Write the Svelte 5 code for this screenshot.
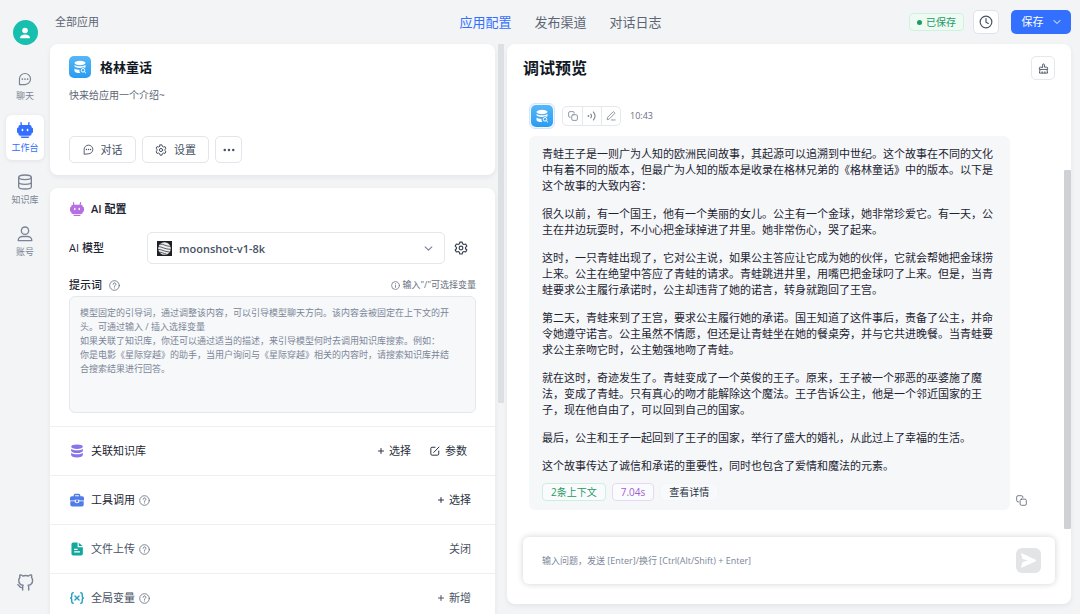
<script lang="ts">
	interface NavItem {
		icon: string;
		label: string;
	}

	interface Action {
		icon?: string;
		label: string;
	}

	interface Section {
		icon: string;
		label: string;
		strong?: boolean;
		help?: boolean;
		actions: Action[];
	}

	const nav: NavItem[] = [
		{ icon: 'chat', label: '聊天' },
		{ icon: 'bot', label: '工作台' },
		{ icon: 'db', label: '知识库' },
		{ icon: 'user', label: '账号' }
	];

	const tabs = ['应用配置', '发布渠道', '对话日志'];

	const sections: Section[] = [
		{
			icon: 'dataset',
			label: '关联知识库',
			strong: true,
			actions: [
				{ icon: 'plus', label: '选择' },
				{ icon: 'edit', label: '参数' }
			]
		},
		{
			icon: 'toolbox',
			label: '工具调用',
			strong: true,
			help: true,
			actions: [{ icon: 'plus', label: '选择' }]
		},
		{ icon: 'file', label: '文件上传', help: true, actions: [{ label: '关闭' }] },
		{
			icon: 'variable',
			label: '全局变量',
			help: true,
			actions: [{ icon: 'plus', label: '新增' }]
		}
	];

	const promptHint =
		'模型固定的引导词，通过调整该内容，可以引导模型聊天方向。该内容会被固定在上下文的开头。可通过输入 / 插入选择变量\n' +
		'如果关联了知识库，你还可以通过适当的描述，来引导模型何时去调用知识库搜索。例如：\n' +
		'你是电影《星际穿越》的助手，当用户询问与《星际穿越》相关的内容时，请搜索知识库并结合搜索结果进行回答。';

	const story = [
		'青蛙王子是一则广为人知的欧洲民间故事，其起源可以追溯到中世纪。这个故事在不同的文化中有着不同的版本，但最广为人知的版本是收录在格林兄弟的《格林童话》中的版本。以下是这个故事的大致内容：',
		'很久以前，有一个国王，他有一个美丽的女儿。公主有一个金球，她非常珍爱它。有一天，公主在井边玩耍时，不小心把金球掉进了井里。她非常伤心，哭了起来。',
		'这时，一只青蛙出现了，它对公主说，如果公主答应让它成为她的伙伴，它就会帮她把金球捞上来。公主在绝望中答应了青蛙的请求。青蛙跳进井里，用嘴巴把金球叼了上来。但是，当青蛙要求公主履行承诺时，公主却违背了她的诺言，转身就跑回了王宫。',
		'第二天，青蛙来到了王宫，要求公主履行她的承诺。国王知道了这件事后，责备了公主，并命令她遵守诺言。公主虽然不情愿，但还是让青蛙坐在她的餐桌旁，并与它共进晚餐。当青蛙要求公主亲吻它时，公主勉强地吻了青蛙。',
		'就在这时，奇迹发生了。青蛙变成了一个英俊的王子。原来，王子被一个邪恶的巫婆施了魔法，变成了青蛙。只有真心的吻才能解除这个魔法。王子告诉公主，他是一个邻近国家的王子，现在他自由了，可以回到自己的国家。',
		'最后，公主和王子一起回到了王子的国家，举行了盛大的婚礼，从此过上了幸福的生活。',
		'这个故事传达了诚信和承诺的重要性，同时也包含了爱情和魔法的元素。'
	];

	let activeNav = $state(1);
	let activeTab = $state(0);
	let model = $state('moonshot-v1-8k');
	let prompt = $state('');
	let question = $state('');
</script>

{#snippet icon(name: string, size: number)}
	<svg
		width={size}
		height={size}
		viewBox="0 0 24 24"
		fill="none"
		stroke="currentColor"
		stroke-width="2"
		stroke-linecap="round"
		stroke-linejoin="round"
		aria-hidden="true"
	>
		{#if name === 'chat'}
			<path d="M2.500 21.500V12A9.500 9.500 0 1 1 12 21.500z" />
			<g fill="currentColor" stroke="none">
				<circle cx="7.500" cy="12" r="1.500" />
				<circle cx="12" cy="12" r="1.500" />
				<circle cx="16.500" cy="12" r="1.500" />
			</g>
		{:else if name === 'bot'}
			<g fill="currentColor" stroke="none">
				<path
					fill-rule="evenodd"
					d="M5 4.500h14a3 3 0 0 1 3 3v1h.5A1.500 1.500 0 0 1 24 10v5a1.500 1.500 0 0 1-1.500 1.500H22v1a3 3 0 0 1-3 3H5a3 3 0 0 1-3-3v-1h-.5A1.500 1.500 0 0 1 0 15v-5a1.500 1.500 0 0 1 1.500-1.500H2v-1a3 3 0 0 1 3-3zM8.200 10A1.200 1.200 0 0 0 7 11.200v1.600a1.200 1.200 0 0 0 2.400 0v-1.600A1.200 1.200 0 0 0 8.200 10zm7.600 0a1.200 1.200 0 0 0-1.200 1.200v1.600a1.200 1.200 0 0 0 2.400 0v-1.600a1.200 1.200 0 0 0-1.200-1.200z"
				/>
				<path d="M5.500 21.700h13c-.3 1.500-1.300 2.300-2.800 2.300H8.300c-1.500 0-2.500-.8-2.800-2.300z" />
			</g>
			<path d="M6 1l.6 4.500M18 1l-.6 4.500" />
		{:else if name === 'db'}
			<ellipse cx="12" cy="5" rx="9.500" ry="3.500" />
			<path d="M2.500 5v14c0 2 4.200 3.500 9.500 3.500s9.500-1.500 9.500-3.500V5M2.500 12c0 2 4.200 3.500 9.500 3.500s9.500-1.500 9.500-3.500" />
		{:else if name === 'user'}
			<circle cx="12" cy="7" r="5.500" />
			<path d="M1.800 22c0-4 3.200-6.200 6.400-6.200h7.600c3.200 0 6.400 2.200 6.400 6.200z" />
		{:else if name === 'github'}
			<path
				d="M8 22.500v-3.500c-2.800.8-4.200-.4-5-2.200-.5-1-1.200-1.500-2-1.800M16.500 22.500v-4c0-1.200-.2-2-.8-2.700 3.300-.4 6.300-1.800 6.300-6.800 0-1.600-.5-3-1.500-4.200.4-1.200.3-2.500-.2-3.500-1.500-.1-3 .7-4 1.500a14 14 0 0 0-8 0C7.300 2 5.700 1.200 4.300 1.300c-.5 1-.6 2.300-.2 3.500C3 6 2.500 7.400 2.500 9c0 5 3 6.400 6.200 6.800-.6.700-.8 1.500-.7 2.700"
			/>
		{:else if name === 'gear'}
			<path
				d="M10 1.800h4l.7 3 2.300 1.300 3-.9 2 3.500-2.200 2.100v2.500l2.200 2.100-2 3.500-3-.9-2.300 1.300-.7 3h-4l-.7-3L7 18l-3 .9-2-3.500 2.200-2.100v-2.500L2 8.700l2-3.500 3 .9 2.300-1.300z"
			/>
			<circle cx="12" cy="12" r="3.200" />
		{:else if name === 'more'}
			<g fill="currentColor" stroke="none">
				<circle cx="3.500" cy="12" r="2.500" />
				<circle cx="12" cy="12" r="2.500" />
				<circle cx="20.500" cy="12" r="2.500" />
			</g>
		{:else if name === 'help'}
			<circle cx="12" cy="12" r="10.500" stroke-width="1.800" />
			<path d="M9 9.300a3 3 0 1 1 4.600 2.500c-1 .7-1.600 1.200-1.600 2.200M12 17.300v.2" />
		{:else if name === 'info'}
			<circle cx="12" cy="12" r="10.500" />
			<path d="M12 11v6M12 7v.2" />
		{:else if name === 'chevron'}
			<path d="M3 7.500l9 9 9-9" stroke-width="3" />
		{:else if name === 'plus'}
			<path d="M12 2v20M2 12h20" stroke-width="4" />
		{:else if name === 'edit'}
			<path d="M12 3H5a3 3 0 0 0-3 3v13a3 3 0 0 0 3 3h13a3 3 0 0 0 3-3v-7M9 15.500L21.500 2.500" stroke-width="2.400" />
		{:else if name === 'dataset'}
			<g fill="currentColor" stroke="none">
				<path d="M12 1c6 0 10 1.600 10 3.700S18 8.500 12 8.500 2 6.800 2 4.700 6 1 12 1z" />
				<path d="M2 8c2 1.800 5.600 2.700 10 2.700S20 9.800 22 8v3.500c0 2.100-4 4-10 4s-10-1.900-10-4z" />
				<path d="M2 15c2 1.800 5.600 2.700 10 2.700s8-.9 10-2.700v3.700c0 2.300-4 4.300-10 4.300S2 21 2 18.700z" />
			</g>
		{:else if name === 'toolbox'}
			<path d="M7.500 6.500V4.200A1.700 1.700 0 0 1 9.200 2.500h5.600a1.700 1.700 0 0 1 1.700 1.700v2.300" stroke-width="2.500" />
			<g fill="currentColor" stroke="none">
				<path d="M3 5.500h18a3 3 0 0 1 3 3V13h-8v-1.500H8V13H0V8.500a3 3 0 0 1 3-3z" />
				<path d="M.5 14.200H8c0 2 1.500 3.300 4 3.300s4-1.300 4-3.300h7.500v5.800a3 3 0 0 1-3 3h-17a3 3 0 0 1-3-3z" />
				<path d="M10 12.500h4v2.300c0 1.600-4 1.600-4 0z" />
			</g>
		{:else if name === 'file'}
			<path
				fill="currentColor"
				stroke="none"
				fill-rule="evenodd"
				d="M5.500 1H13v6.500A1.500 1.500 0 0 0 14.500 9H22v11a3 3 0 0 1-3 3H5.500a3 3 0 0 1-3-3V4a3 3 0 0 1 3-3zM15 1.300L21.700 7H15zM7 11.500v2h6v-2zm0 4.500v2h10v-2z"
			/>
		{:else if name === 'variable'}
			<path d="M5.500 3C3 3 3 4.500 3 6.500v3C3 11 2.300 12 .8 12 2.300 12 3 13 3 14.500v3C3 19.500 3 21 5.500 21M18.500 3C21 3 21 4.500 21 6.500v3c0 1.500.7 2.500 2.200 2.500-1.500 0-2.200 1-2.200 2.500v3c0 2 0 3.500-2.500 3.500M8.500 8.500l7 7M15.500 8.500l-7 7" stroke-width="2.400" />
		{:else if name === 'clock'}
			<circle cx="12" cy="12" r="10" />
			<path d="M12 6v6.500l4 2" />
		{:else if name === 'brush'}
			<path d="M10 9V4a2 2 0 0 1 4 0v5h5a2 2 0 0 1 2 2v3H3v-3a2 2 0 0 1 2-2zM4.500 14L3 22h18l-1.500-8M9 22v-3M15 22v-3" />
		{:else if name === 'copy'}
			<rect x="9" y="9" width="13.500" height="13.500" rx="3" />
			<path d="M5.500 15H4.500a3 3 0 0 1-3-3V4.500a3 3 0 0 1 3-3H12a3 3 0 0 1 3 3V5.500" />
		{:else if name === 'voice'}
			<path d="M9 7.500a7 7 0 0 1 0 9M15.500 2.500c4.500 5.500 4.500 13.500 0 19" stroke-width="2.600" />
			<circle cx="3.500" cy="12" r="2.200" fill="currentColor" stroke="none" />
		{:else if name === 'pen'}
			<path d="M3 20l1-5L16.500 2.500a2 2 0 0 1 2.800 0l1.200 1.200a2 2 0 0 1 0 2.800L8 19zM13 21.500h9" />
		{/if}
	</svg>
{/snippet}

{#snippet appLogo()}
	<svg class="app-logo" viewBox="0 0 22 22" aria-hidden="true">
		<defs>
			<linearGradient id="sky" x1="0" y1="0" x2="0" y2="1">
				<stop offset="0" stop-color="#56b7f6" />
				<stop offset="1" stop-color="#2a9bf2" />
			</linearGradient>
		</defs>
		<rect width="22" height="22" rx="5" fill="url(#sky)" />
		<g fill="#fff">
			<ellipse cx="11" cy="7" rx="5.500" ry="2.200" />
			<path d="M5.500 8.900c1.300.9 3.200 1.300 5.500 1.300s4.200-.4 5.500-1.300v2c0 .3-.2.600-.6.800-.6-.2-1.200-.4-1.900-.4-.8 0-1.500.2-2.100.6-3.700.3-6.400-.6-6.400-1.800z" />
			<path d="M5.500 12.400c1.200.8 2.900 1.300 5 1.300a3.400 3.400 0 0 0 .9 3.300c-3.500.1-5.900-.9-5.900-2.100z" />
		</g>
		<circle cx="14" cy="14.300" r="1.800" fill="none" stroke="#fff" />
		<path d="M15.400 15.700l1.300 1.300" stroke="#fff" stroke-linecap="round" />
	</svg>
{/snippet}

<div class="app">
	<aside class="sidebar">
		<button class="avatar" aria-label="用户">
			<svg width="12" height="12" viewBox="0 0 12 12" fill="#fff" aria-hidden="true">
				<circle cx="6" cy="3.500" r="2.800" />
				<path d="M1 11.200c0-2.500 2-3.700 5-3.700s5 1.200 5 3.700z" />
			</svg>
		</button>
		<nav class="nav">
			{#each nav as item, i (item.icon)}
				<a
					class="nav-item"
					class:active={i === activeNav}
					href="#{item.icon}"
					onclick={() => (activeNav = i)}
				>
					{@render icon(item.icon, item.icon === 'chat' ? 14 : 16)}
					<span>{item.label}</span>
				</a>
			{/each}
		</nav>
		<a class="github" href="#github" aria-label="GitHub">{@render icon('github', 17)}</a>
	</aside>

	<main class="main">
		<header class="topbar">
			<a class="back" href="#apps">全部应用</a>
			<nav class="tabs">
				{#each tabs as tab, i (tab)}
					<button class="tab" class:active={i === activeTab} onclick={() => (activeTab = i)}>
						{tab}
					</button>
				{/each}
			</nav>
			<div class="tools">
				<span class="saved"><i class="dot"></i>已保存</span>
				<button class="history" aria-label="历史">{@render icon('clock', 14)}</button>
				<button class="save">保存 {@render icon('chevron', 8)}</button>
			</div>
		</header>

		<div class="body">
			<div class="config">
				<section class="card intro">
					<div class="intro-head">
						{@render appLogo()}
						<h1>格林童话</h1>
					</div>
					<p class="intro-text">快来给应用一个介绍~</p>
					<div class="intro-actions">
						<button class="btn">{@render icon('chat', 11)}对话</button>
						<button class="btn">{@render icon('gear', 12)}设置</button>
						<button class="btn square" aria-label="更多">{@render icon('more', 12)}</button>
					</div>
				</section>

				<section class="card settings">
					<div class="ai">
						<h2 class="ai-title">
							<span class="tint bot">{@render icon('bot', 14)}</span>AI 配置
						</h2>
						<div class="model">
							<label for="model">AI 模型</label>
							<div class="select">
								<svg width="15" height="15" viewBox="0 0 15 15" aria-hidden="true">
									<rect width="15" height="15" fill="#1d1f22" />
									<circle cx="7.500" cy="7.500" r="6.300" fill="#eceef0" />
									<path
										d="M3 3.200c3.500-.6 5.500 2.300 11 2.200M1 5.500c4 .2 6.500 2.700 12.800 2.800M1 8.300c4 .2 6 2.300 11.500 2.700M2 11.200c3 0 4.500 1.300 7.500 1.900"
										fill="none"
										stroke="#1d1f22"
										stroke-width="0.700"
									/>
								</svg>
								<select id="model" bind:value={model}>
									<option>moonshot-v1-8k</option>
								</select>
								<span class="arrow">{@render icon('chevron', 9)}</span>
							</div>
							<button class="gear" aria-label="模型设置">{@render icon('gear', 14)}</button>
						</div>
						<div class="prompt-head">
							<label for="prompt">提示词</label>
							<span class="help">{@render icon('help', 11)}</span>
							<span class="tip">{@render icon('info', 9)}输入"/"可选择变量</span>
						</div>
						<textarea id="prompt" placeholder={promptHint} bind:value={prompt}></textarea>
					</div>

					{#each sections as s (s.icon)}
						<div class="row">
							<span class="tint {s.icon}">{@render icon(s.icon, 14)}</span>
							<h3 class:strong={s.strong}>{s.label}</h3>
							{#if s.help}
								<span class="help">{@render icon('help', 11)}</span>
							{/if}
							<div class="row-actions" class:multi={s.actions.length > 1}>
								{#each s.actions as a (a.label)}
									<button class="ghost" class:strong={s.strong}>
										{#if a.icon}{@render icon(a.icon, a.icon === 'plus' ? 6 : 10)}{/if}{a.label}
									</button>
								{/each}
							</div>
						</div>
					{/each}
				</section>
			</div>

			<div class="config-track"><div class="thumb"></div></div>

			<section class="card preview">
				<div class="preview-head">
					<h2>调试预览</h2>
					<button class="clear" aria-label="清空">{@render icon('brush', 11)}</button>
				</div>

				<div class="chat">
					<div class="messages">
						<div class="msg-head">
							<span class="msg-avatar">{@render appLogo()}</span>
							<div class="msg-tools">
								<button aria-label="复制">{@render icon('copy', 10)}</button>
								<button aria-label="朗读">{@render icon('voice', 10)}</button>
								<button aria-label="编辑">{@render icon('pen', 10)}</button>
							</div>
							<time>10:43</time>
						</div>
						<div class="msg-row">
							<article class="bubble">
								{#each story as p}
									<p>{p}</p>
								{/each}
								<div class="tags">
									<button class="tag green">2条上下文</button>
									<span class="tag purple">7.04s</span>
									<button class="tag plain">查看详情</button>
								</div>
							</article>
							<button class="copy" aria-label="复制">{@render icon('copy', 11)}</button>
						</div>
					</div>
					<div class="chat-track"><div class="thumb"></div></div>
				</div>

				<div class="composer">
					<input
						type="text"
						aria-label="输入问题"
						placeholder="输入问题，发送 [Enter]/换行 [Ctrl(Alt/Shift) + Enter]"
						bind:value={question}
					/>
					<button class="send" aria-label="发送">
						<svg width="15" height="15" viewBox="0 0 15 15" fill="#fff" aria-hidden="true">
							<path d="M1.200.4l13 6.200a1 1 0 0 1 0 1.800l-13 6.200c-.7.300-1.200-.3-1-.9L1.500 9l5.500-1.500L1.500 6 .2 1.300C0 .7.500.1 1.200.4z" />
						</svg>
					</button>
				</div>
			</section>
		</div>
	</main>
</div>

<style>
	:global(body) {
		margin: 0;
		background: #f3f4f6;
	}

	.app,
	.app button,
	.app select,
	.app input,
	.app textarea {
		font-family: 'Open Sans', 'Noto Sans CJK SC', sans-serif;
	}

	.app {
		display: flex;
		height: 100vh;
		overflow: hidden;
		font-size: 11px;
		line-height: 16px;
		color: #1d2532;
	}

	.app * {
		box-sizing: border-box;
	}

	h1,
	h2,
	h3,
	p {
		margin: 0;
	}

	button {
		display: flex;
		align-items: center;
		justify-content: center;
		padding: 0;
		border: 0;
		background: none;
		color: inherit;
		font-size: 11px;
		line-height: 16px;
		cursor: pointer;
	}

	a {
		color: inherit;
		text-decoration: none;
	}

	svg {
		display: block;
		flex: none;
	}

	.card {
		background: #fff;
		border-radius: 8px;
		box-shadow: 0 2px 5px rgba(30, 40, 60, 0.07);
	}

	/* sidebar */
	.sidebar {
		display: flex;
		flex-direction: column;
		align-items: center;
		flex: none;
		width: 50px;
		padding: 20px 0 23px;
	}

	.avatar {
		width: 25px;
		height: 25px;
		border-radius: 50%;
		background: #17bfae;
	}

	.nav {
		display: flex;
		flex-direction: column;
		gap: 7px;
		margin-top: 18px;
	}

	.nav-item {
		display: flex;
		flex-direction: column;
		align-items: center;
		justify-content: flex-end;
		gap: 3px;
		width: 38px;
		height: 45px;
		padding-bottom: 5px;
		border-radius: 6px;
		color: #7b8494;
		font-size: 9px;
		line-height: 14px;
	}

	.nav-item.active {
		background: #fff;
		color: #3370ff;
		box-shadow: 0 1px 4px rgba(30, 40, 60, 0.09);
	}

	.github {
		margin-top: auto;
		color: #7b8494;
	}

	/* top bar */
	.main {
		display: flex;
		flex-direction: column;
		flex: 1;
		min-width: 0;
		padding-right: 9px;
	}

	.topbar {
		display: grid;
		grid-template-columns: 1fr auto 1fr;
		align-items: center;
		flex: none;
		height: 44px;
	}

	.back {
		padding-left: 5px;
		color: #5c6573;
	}

	.tabs {
		display: flex;
		gap: 23px;
	}

	.tab {
		color: #5c6573;
		font-size: 13px;
	}

	.tab.active {
		color: #3370ff;
	}

	.tools {
		display: flex;
		align-items: center;
		justify-content: flex-end;
	}

	.saved {
		display: flex;
		align-items: center;
		gap: 4px;
		height: 18px;
		padding: 0 7px;
		border: 1px solid #cdf3df;
		border-radius: 4px;
		background: #edfbf3;
		color: #1f9a63;
		font-size: 10px;
	}

	.dot {
		width: 5px;
		height: 5px;
		border-radius: 50%;
		background: #1f9a63;
	}

	.history {
		width: 26px;
		height: 24px;
		margin: 0 12px 0 9px;
		border: 1px solid #dfe2ea;
		border-radius: 5px;
		background: #fff;
		color: #485264;
	}

	.save {
		gap: 9px;
		width: 60px;
		height: 24px;
		border-radius: 5px;
		background: #3370ff;
		color: #fff;
	}

	/* columns */
	.body {
		display: grid;
		grid-template-columns: minmax(0, 445fr) 6px minmax(0, 564fr);
		grid-template-rows: minmax(0, 1fr);
		column-gap: 3px;
		flex: 1;
		min-height: 0;
	}

	.config {
		display: flex;
		flex-direction: column;
		gap: 13px;
		min-height: 0;
	}

	.config-track .thumb {
		height: 63%;
		border-radius: 1px;
		background: #dcdfe3;
	}

	/* intro */
	.intro {
		padding: 12px 19px;
	}

	.intro-head {
		display: flex;
		align-items: center;
		gap: 9px;
	}

	.app-logo {
		width: 22px;
		height: 22px;
	}

	.intro-head h1 {
		color: #111824;
		font-size: 13px;
		font-weight: 600;
		line-height: 22px;
	}

	.intro-text {
		margin-top: 9px;
		color: #5c6573;
		font-size: 10px;
	}

	.intro-actions {
		display: flex;
		gap: 6px;
		margin-top: 33px;
	}

	.btn {
		gap: 7px;
		width: 67px;
		height: 27px;
		border: 1px solid #e2e5eb;
		border-radius: 5px;
		color: #485264;
	}

	.btn.square {
		width: 27px;
	}

	/* settings */
	.settings {
		flex: 1 0 auto;
	}

	.ai {
		padding: 13px 19px;
	}

	.ai-title {
		display: flex;
		align-items: center;
		gap: 7px;
		font-size: 11px;
		font-weight: 600;
	}

	.tint {
		flex: none;
		margin-left: 1px;
	}

	.bot {
		color: #b66fe0;
	}

	.dataset {
		color: #8a74e8;
	}

	.toolbox {
		color: #4f7ce8;
	}

	.file {
		color: #14a79c;
	}

	.variable {
		color: #259fc4;
	}

	.model {
		display: flex;
		align-items: center;
		margin-top: 15px;
	}

	.model label {
		flex: none;
		width: 78px;
		font-weight: 500;
	}

	.select {
		display: flex;
		align-items: center;
		flex: 1;
		gap: 7px;
		height: 32px;
		padding: 0 11px 0 9px;
		border: 1px solid #e4e7ec;
		border-radius: 5px;
	}

	.select select {
		flex: 1;
		min-width: 0;
		padding: 0;
		border: 0;
		outline: 0;
		appearance: none;
		background: none;
		color: #485264;
		font-size: 11px;
		font-weight: 600;
	}

	.arrow {
		color: #7b8494;
	}

	.gear {
		width: 31px;
		height: 32px;
		color: #384252;
	}

	.prompt-head {
		display: flex;
		align-items: center;
		margin: 13px 0 3px;
		font-weight: 500;
	}

	.help {
		margin-left: 7px;
		color: #677080;
	}

	.tip {
		display: flex;
		align-items: center;
		gap: 3px;
		margin-left: auto;
		color: #677080;
		font-size: 9px;
		font-weight: 400;
	}

	textarea {
		display: block;
		width: 100%;
		height: 117px;
		padding: 9px 20px 9px 10px;
		border: 1px solid #e4e8ee;
		border-radius: 6px;
		outline: 0;
		background: #f6f8fa;
		font-size: 9px;
		line-height: 14px;
		resize: none;
	}

	textarea::placeholder,
	.composer input::placeholder {
		color: #7c8698;
		opacity: 1;
	}

	.row {
		display: flex;
		align-items: center;
		height: 49px;
		padding: 0 19px;
		border-top: 1px solid #eceff3;
	}

	.row h3 {
		margin-left: 7px;
		color: #485264;
		font-size: 11px;
		font-weight: 400;
	}

	.row h3.strong {
		color: #1d2532;
	}

	.row .help {
		margin-left: 4px;
	}

	.row-actions {
		display: flex;
		gap: 19px;
		margin-left: auto;
		padding-right: 5px;
	}

	.row-actions.multi {
		padding-right: 9px;
	}

	.ghost {
		gap: 5px;
		color: #485264;
	}

	.ghost.strong {
		color: #2a3342;
	}

	/* preview */
	.preview {
		display: flex;
		flex-direction: column;
		min-width: 0;
		margin-bottom: 10px;
		padding-bottom: 20px;
	}

	.preview-head {
		display: flex;
		align-items: center;
		justify-content: space-between;
		padding: 12px 16px 0;
	}

	.preview-head h2 {
		color: #111824;
		font-size: 16px;
		font-weight: 700;
		line-height: 24px;
	}

	.clear {
		width: 24px;
		height: 24px;
		border: 1px solid #e4e7ec;
		border-radius: 5px;
		color: #485264;
	}

	.chat {
		display: flex;
		flex: 1;
		min-height: 0;
		overflow: hidden;
	}

	.messages {
		flex: 1;
		min-width: 0;
		padding: 23px 0 0 22px;
	}

	.msg-head {
		display: flex;
		align-items: center;
		gap: 7px;
	}

	.msg-avatar {
		padding: 1px;
		border: 1px solid #d5e6f8;
		border-radius: 6px;
		background: #f0f7fe;
	}

	.msg-tools {
		display: flex;
		border: 1px solid #e4e7ec;
		border-radius: 5px;
		color: #7b8494;
	}

	.msg-tools button {
		width: 19px;
		height: 18px;
	}

	.msg-tools button + button {
		border-left: 1px solid #e4e7ec;
	}

	.msg-head time {
		margin-left: 2px;
		color: #677080;
		font-size: 9px;
	}

	.msg-row {
		display: flex;
		align-items: flex-end;
		gap: 6px;
		margin-top: 7px;
		padding-right: 37px;
	}

	.bubble {
		flex: 1;
		min-width: 0;
		padding: 10px 13px 9px;
		border-radius: 6px;
		background: #f5f7f9;
	}

	.bubble p {
		margin-bottom: 12px;
	}

	.bubble p:last-of-type {
		margin-bottom: 9px;
	}

	.tags {
		display: flex;
		gap: 6px;
	}

	.tag {
		height: 18px;
		padding: 0 8px;
		border: 1px solid #e9ecf1;
		border-radius: 4px;
		background: #fafbfd;
		font-size: 10px;
		line-height: 16px;
	}

	.tag.green {
		border-color: #cdf0de;
		color: #1f9a63;
	}

	.tag.purple {
		border-color: #ead7f6;
		color: #a45bd0;
	}

	.tag.plain {
		border-color: #f3f5f8;
		background: #f7f9fb;
		color: #2a3342;
	}

	.copy {
		padding: 4px 0;
		color: #677080;
	}

	.chat-track {
		display: flex;
		align-items: flex-end;
		flex: none;
		width: 7px;
		padding-bottom: 8px;
	}

	.chat-track .thumb {
		width: 100%;
		height: 80%;
		border-radius: 1px;
		background: #cfd2d5;
	}

	.composer {
		display: flex;
		align-items: center;
		flex: none;
		height: 47px;
		margin: 0 16px;
		padding: 0 14px 0 19px;
		border-radius: 6px;
		background: #fff;
		box-shadow: 0 0 6px rgba(20, 30, 50, 0.2);
	}

	.composer input {
		flex: 1;
		min-width: 0;
		padding: 0;
		border: 0;
		outline: 0;
		background: none;
		font-size: 9px;
		line-height: 16px;
	}

	.send {
		width: 25px;
		height: 25px;
		border-radius: 6px;
		background: #e3e4e6;
	}
</style>
